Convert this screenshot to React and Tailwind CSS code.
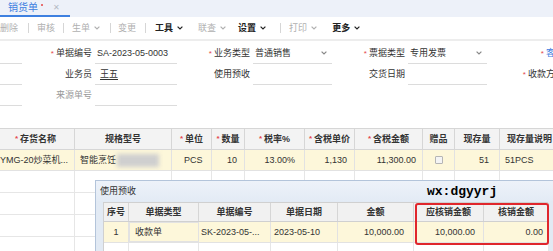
import React from 'react';

const Chevron = ({ className = '' }) => (
  <svg width="6" height="4" viewBox="0 0 6 4" className={className}>
    <path d="M0.6 0.6 L3 3 L5.4 0.6" fill="none" stroke="currentColor" strokeWidth="1.2" />
  </svg>
);

const Sep = ({ ml }) => <span className={`w-px h-[10px] bg-[#d6d6d6] ${ml}`} />;

const Star = () => <span className="text-[#e5484d] mr-[2px] text-[8px]">*</span>;

const mainCols = [
  { w: 'w-[78px]', label: '存货名称', req: true, val: 'YMG-20炒菜机...', cls: 'pl-[3px]' },
  { w: 'w-[97px]', label: '规格型号', val: 'spec', cls: 'pl-[5px]' },
  { w: 'w-[40px]', label: '单位', req: true, val: 'PCS', cls: 'pl-[12px]' },
  { w: 'w-[33px]', label: '数量', req: true, val: '10', cls: 'justify-end pr-[7px]' },
  { w: 'w-[60px]', label: '税率%', req: true, val: '13.00%', cls: 'justify-end pr-[9px]' },
  { w: 'w-[50px]', label: '含税单价', req: true, val: '1,130', cls: 'justify-end pr-[7px]' },
  { w: 'w-[68px]', label: '含税金额', req: true, val: '11,300.00', cls: 'justify-end pr-[6px]' },
  { w: 'w-[32px]', label: '赠品', val: 'check', cls: 'justify-center' },
  { w: 'w-[45px]', label: '现存量', val: '51', cls: 'justify-end pr-[10px]' },
  { w: 'w-[60px]', label: '现存量说明', val: '51PCS', cls: 'pl-[5px]' },
];

const dlgCols = [
  { w: 'w-[25px]', label: '序号', val: '1', cls: 'justify-center' },
  { w: 'w-[70px]', label: '单据类型', val: '收款单', cls: 'pl-[5px]', sel: true },
  { w: 'w-[72px]', label: '单据编号', val: 'SK-2023-05-...', cls: 'pl-[2px]' },
  { w: 'w-[67px]', label: '单据日期', val: '2023-05-10', cls: 'pl-[3px]' },
  { w: 'w-[76px]', label: '金额', val: '10,000.00', cls: 'justify-end pr-[9px]' },
  { w: 'w-[70px]', label: '应核销金额', val: '10,000.00', cls: 'justify-end pr-[8px]' },
  { w: 'w-[65px]', label: '核销金额', val: '0.00', cls: 'justify-end pr-[5px]' },
];

const Label = ({ w, children, className = '' }) => (
  <div className={`${w} shrink-0 flex items-center justify-end pr-[3px] ${className}`}>{children}</div>
);

const Field = ({ w, children, chevron }) => (
  <div className={`${w} shrink-0 border-b border-[#dcdcdc] flex items-center pl-[2px] pr-[5px]`}>
    <span className="flex-1">{children}</span>
    {chevron && <Chevron className="text-[#888]" />}
  </div>
);

export default function App() {
  return (
    <div className="relative w-[553px] h-[251px] overflow-hidden bg-white text-[9px] text-[#333] leading-none font-['Liberation_Sans','Noto_Sans_CJK_SC',sans-serif]">
      {/* Tab bar */}
      <div className="h-[17px] bg-[#edf1f9] flex">
        <div className="w-[70px] h-[17px] border-b-2 border-[#3e80e0] flex items-center pl-[8px]">
          <span className="text-[10px] text-[#3e80e0]">销货单</span>
          <span className="ml-[3px] mb-[5px] w-[2px] h-[2px] rounded-full bg-[#e54545]" />
          <span className="ml-[10px] text-[#b4bac4] text-[8px]">✕</span>
        </div>
      </div>

      {/* Toolbar */}
      <div className="h-[24px] border-b-2 border-[#ededed] flex items-center">
        <span className="text-[#b0b0b0]">删除</span>
        <Sep ml="ml-[10px]" />
        <span className="ml-[8px] text-[#b0b0b0]">审核</span>
        <Sep ml="ml-[8px]" />
        <span className="ml-[8px] text-[#b0b0b0]">生单</span>
        <Chevron className="ml-[4px] text-[#b0b0b0]" />
        <Sep ml="ml-[10px]" />
        <span className="ml-[7px] text-[#b0b0b0]">变更</span>
        <Sep ml="ml-[9px]" />
        <span className="ml-[9px] text-[#222] font-bold">工具</span>
        <Chevron className="ml-[4px] text-[#222]" />
        <span className="ml-[15px] text-[#b0b0b0]">联查</span>
        <Chevron className="ml-[4px] text-[#b0b0b0]" />
        <span className="ml-[12px] text-[#222] font-bold">设置</span>
        <Chevron className="ml-[4px] text-[#222]" />
        <Sep ml="ml-[14px]" />
        <span className="ml-[8px] text-[#b0b0b0]">打印</span>
        <Chevron className="ml-[4px] text-[#b0b0b0]" />
        <span className="ml-[15px] text-[#222] font-bold">更多</span>
        <Chevron className="ml-[4px] text-[#222]" />
      </div>

      {/* Form */}
      <div className="pt-[2px]">
        <div className="flex h-[21px]">
          <div className="w-[22px] shrink-0 border-b border-[#dcdcdc]" />
          <Label w="w-[73px]"><Star />单据编号</Label>
          <Field w="w-[82px]">SA-2023-05-0003</Field>
          <Label w="w-[76px]"><Star />业务类型</Label>
          <Field w="w-[79px]" chevron>普通销售</Field>
          <Label w="w-[76px]"><Star />票据类型</Label>
          <Field w="w-[79px]" chevron>专用发票</Field>
          <Label w="w-[80px]"><Star /><span className="text-[#3e80e0]">客户</span></Label>
        </div>
        <div className="flex h-[21px]">
          <div className="w-[22px] shrink-0 border-b border-[#dcdcdc]" />
          <Label w="w-[73px]">业务员</Label>
          <Field w="w-[82px]"><span className="ml-[3px] underline underline-offset-2">王五</span></Field>
          <Label w="w-[76px]">使用预收</Label>
          <Field w="w-[79px]" />
          <Label w="w-[76px]">交货日期</Label>
          <Field w="w-[79px]" />
          <Label w="w-[80px]"><Star />收款方式</Label>
        </div>
        <div className="flex h-[21px]">
          <div className="w-[22px] shrink-0 border-b border-[#dcdcdc]" />
          <Label w="w-[73px]" className="text-[#999]">来源单号</Label>
          <Field w="w-[82px]" />
        </div>
      </div>

      {/* Main grid */}
      <div className="mt-[22px] -ml-[3px] w-[563px]">
        <div className="flex h-[22px] border-y border-[#d6d6d6] bg-[#f3f3f3]">
          {mainCols.map((c) => (
            <div key={c.label} className={`${c.w} shrink-0 border-r border-[#d6d6d6] flex items-center justify-center font-bold text-[#333]`}>
              {c.req && <Star />}
              {c.label}
            </div>
          ))}
        </div>
        <div className="flex h-[21px] border-b border-[#e2e2e2] bg-[#fdf7da]">
          {mainCols.map((c) => (
            <div key={c.label} className={`${c.w} shrink-0 border-r border-[#e2e2e2] flex items-center whitespace-nowrap overflow-hidden ${c.cls}`}>
              {c.val === 'spec' ? (
                <>
                  <span>智能烹饪</span>
                  <span className="ml-[1px] w-[42px] h-[13px] bg-[#cfcfcf] blur-[2px]" />
                </>
              ) : c.val === 'check' ? (
                <span className="w-[8px] h-[8px] border border-[#b5b5b5] bg-[#f4f4f4] rounded-[1px]" />
              ) : (
                c.val
              )}
            </div>
          ))}
        </div>
        {[0, 1, 2, 3].map((r) => (
          <div key={r} className="flex h-[22px] border-b border-[#e6e6e6]">
            {mainCols.map((c) => (
              <div key={c.label} className={`${c.w} shrink-0 border-r border-[#e6e6e6]`} />
            ))}
          </div>
        ))}
      </div>

      {/* Dialog: 使用预收 */}
      <div className="absolute left-[95px] top-[180px] w-[470px] h-[100px] border border-[#b3c4da] bg-[#e2eaf4]">
        <div className="h-[20px] flex items-center pl-[4px] bg-gradient-to-b from-[#edf2f9] to-[#e3ebf5] text-[#333]">使用预收</div>
        <div className="ml-[7px] mt-px w-[445px] bg-white border-l border-[#d0d0d0]">
          <div className="flex h-[20px] bg-[#f1f1f1] border-y border-[#d0d0d0]">
            {dlgCols.map((c) => (
              <div key={c.label} className={`${c.w} shrink-0 border-r border-[#d6d6d6] flex items-center justify-center font-bold`}>
                {c.label}
              </div>
            ))}
          </div>
          <div className="flex h-[21px] bg-[#fdf7da] border-b border-[#e2e2e2]">
            {dlgCols.map((c) => (
              <div key={c.label} className={`${c.w} shrink-0 border-r border-[#e2e2e2] flex items-center whitespace-nowrap ${c.sel ? 'border border-[#333]' : ''} ${c.cls}`}>
                {c.val}
              </div>
            ))}
          </div>
          <div className="flex h-[22px] border-b border-[#e6e6e6]">
            {dlgCols.map((c) => (
              <div key={c.label} className={`${c.w} shrink-0 border-r border-[#e6e6e6]`} />
            ))}
          </div>
        </div>
      </div>

      {/* Highlight box */}
      <div className="absolute left-[415px] top-[203px] w-[134px] h-[42px] border-2 border-[#e0262c] rounded-[3px]" />

      {/* Watermark */}
      <div className="absolute left-[427px] top-[185px] text-[13px] font-bold text-black font-['Liberation_Mono',monospace]">wx:dgyyrj</div>
    </div>
  );
}
